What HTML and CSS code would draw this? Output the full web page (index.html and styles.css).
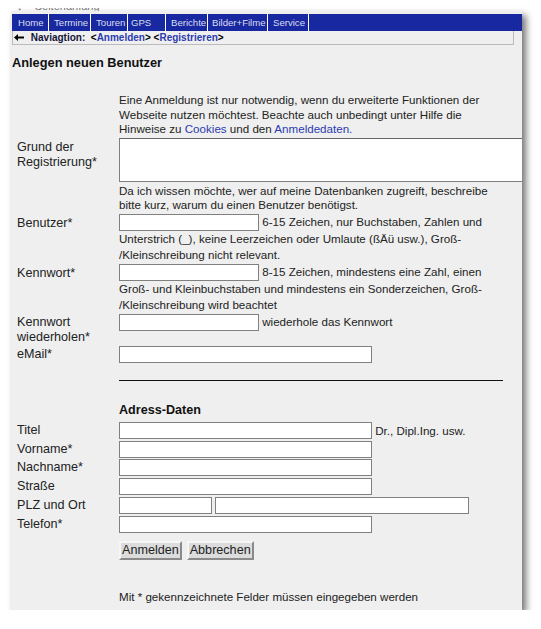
FILE: index.html
```html
<!DOCTYPE html>
<html lang="de">
<head>
<meta charset="UTF-8" />
<title>Registrieren</title>
<link rel="stylesheet" href="styles.css">
</head>
<body>

<div class="page">
  <div class="peek"><span>&darr; &nbsp; &nbsp;Seitenanfang</span></div>

  <div class="panel">

    <!-- main menu -->
    <ul class="menu">
      <li class="w-home">Home</li>
      <li class="w-termine">Termine</li>
      <li class="w-touren">Touren</li>
      <li class="w-gps">GPS</li>
      <li class="w-berichte">Berichte</li>
      <li class="w-bilder">Bilder+Filme</li>
      <li class="w-service">Service</li>
    </ul>

    <div class="crumbs">
      <svg class="back" width="10" height="7" viewBox="0 0 10 7"><path d="M0 3.5 L4 0 V2.5 H10 V4.5 H4 V7 Z" fill="#000"/></svg>
      <span class="crumb-title">Naviagtion:</span>&nbsp; &lt;<a href="#">Anmelden</a>&gt; &lt;<a href="#">Registrieren</a>&gt;
    </div>

    <h1>Anlegen neuen Benutzer</h1>

    <form class="reg">
      <div></div>
      <p class="note">Eine Anmeldung ist nur notwendig, wenn du erweiterte Funktionen der Webseite nutzen möchtest. Beachte auch unbedingt unter Hilfe die Hinweise zu <a href="#">Cookies</a> und den <a href="#">Anmeldedaten.</a></p>

      <label class="tall">Grund der Registrierung*</label>
      <textarea></textarea>

      <div></div>
      <p class="note">Da ich wissen möchte, wer auf meine Datenbanken zugreift, beschreibe bitte kurz, warum du einen Benutzer benötigst.</p>

      <label class="tall">Benutzer*</label>
      <div class="hint"><input type="text" class="short"> 6-15 Zeichen, nur Buchstaben, Zahlen und Unterstrich (_), keine Leerzeichen oder Umlaute (ßÄü usw.), Groß-<wbr>/Kleinschreibung nicht relevant.</div>

      <label class="tall">Kennwort*</label>
      <div class="hint"><input type="password" class="short"> 8-15 Zeichen, mindestens eine Zahl, einen Groß- und Kleinbuchstaben und mindestens ein Sonderzeichen, Groß-<wbr>/Kleinschreibung wird beachtet</div>

      <label>Kennwort wiederholen*</label>
      <div class="hint"><input type="password" class="short"> wiederhole das Kennwort</div>

      <label>eMail*</label>
      <div class="field"><input type="text" class="long"></div>

      <div></div>
      <hr>

      <div></div>
      <h2>Adress-Daten</h2>
    </form>

    <form class="reg address">
      <label>Titel</label>
      <div class="field"><input type="text" class="long"> Dr., Dipl.Ing. usw.</div>

      <label>Vorname*</label>
      <div class="field"><input type="text" class="long"></div>

      <label>Nachname*</label>
      <div class="field"><input type="text" class="long"></div>

      <label>Straße</label>
      <div class="field"><input type="text" class="long"></div>

      <label>PLZ und Ort</label>
      <div class="field pair"><input type="text" class="plz"><input type="text" class="ort"></div>

      <label>Telefon*</label>
      <div class="field"><input type="text" class="long"></div>

      <div></div>
      <div class="buttons">
        <button type="button">Anmelden</button>
        <button type="button">Abbrechen</button>
      </div>

      <div></div>
      <p class="note footnote">Mit * gekennzeichnete Felder müssen eingegeben werden</p>
    </form>

  </div>
</div>

</body>
</html>
```

FILE: styles.css
```css
body {
  margin: 0;
  background: #fff;
  color: #222;
  font-family: "Liberation Sans", Arial, sans-serif;
}
a {
  color: #2b3bb0;
  text-decoration: none;
}
.page {
  padding: 8px 0 0 11px;
}
.peek {
  height: 3px;
  overflow: hidden;
  padding-left: 6px;
  font-size: 11px;
  color: #777;
}
.peek span {
  display: block;
  line-height: 13px;
  margin-top: -8px;
}
.panel {
  width: 511px;
  height: 599px;
  box-sizing: border-box;
  padding: 3px 0 0 1px;
  background: #efefef;
  box-shadow: 4px 4px 7px rgba(0,0,0,0.55);
  overflow: hidden;
}

/* menu bar */
.menu {
  display: flex;
  list-style: none;
  margin: 0;
  padding: 0;
  height: 17px;
  background: #1728a0;
}
.menu li {
  box-sizing: border-box;
  border-right: 1px solid #fff;
  padding-left: 5px;
  font-size: 9.6px;
  line-height: 17px;
  color: #dcdef0;
  white-space: nowrap;
}
.menu .w-home { width: 37px; padding-left: 6px; }
.menu .w-termine { width: 42px; }
.menu .w-touren { width: 37px; }
.menu .w-gps { width: 38px; padding-left: 3px; }
.menu .w-berichte { width: 42px; }
.menu .w-bilder { width: 60px; padding-left: 4px; }
.menu .w-service { width: 41px; }

.crumbs {
  width: 502px;
  height: 14px;
  box-sizing: border-box;
  border: 1px solid #bbb;
  border-top: 0;
  font-size: 10px;
  font-weight: bold;
  line-height: 13px;
  color: #000;
  white-space: nowrap;
}
.crumbs .back {
  margin: 0 4px 0 1px;
}
.crumb-title {
  color: #14143a;
}

h1 {
  margin: 10px 0 0 0;
  font-size: 12.8px;
  line-height: 15px;
  color: #111;
}

/* form grid: label column + field column */
.reg {
  display: grid;
  grid-template-columns: 102px 384px;
  row-gap: 1.5px;
  align-items: start;
  margin: 23px 0 0 5px;
}
.reg label {
  font-size: 12.6px;
  line-height: 15px;
  padding-top: 1px;
}
.reg label.tall {
  padding-top: 2px;
}
.note {
  margin: 0;
  font-size: 11.6px;
  line-height: 14.5px;
}
.hint {
  font-size: 11.6px;
  line-height: 15.5px;
}
textarea {
  display: block;
  width: 420px;
  height: 44px;
  box-sizing: border-box;
  margin: 0;
  border: 1px solid #808080;
  border-top-color: #666;
  background: #fff;
  resize: none;
}
input {
  box-sizing: border-box;
  height: 17px;
  margin: 0;
  padding: 0 2px;
  border: 1px solid #808080;
  background: #fff;
  vertical-align: middle;
}
input.short { width: 140px; }
input.long { width: 253px; }
input.plz { width: 93px; }
input.ort { width: 254px; margin-left: 3px; }

/* single-line field cells */
.field {
  height: 17px;
  font-size: 11.6px;
  line-height: 17px;
  white-space: nowrap;
}
.field input {
  vertical-align: top;
}
.pair {
  display: flex;
}
hr {
  margin: 15px 0 0 0;
  border: 0;
  border-top: 1px solid #111;
  height: 0;
}
h2 {
  margin: 21px 0 1.5px 0;
  font-size: 12.6px;
  line-height: 15px;
  color: #111;
}
.address {
  margin-top: 2px;
  row-gap: 1.8px;
}
.address label {
  padding-top: 1px;
}
.buttons {
  display: flex;
  gap: 5px;
  margin-top: 6.5px;
}
button {
  margin: 0;
  padding: 0 1px;
  border: 2px solid;
  border-color: #f6f6f6 #8a8a8a #8a8a8a #f6f6f6;
  background: #dcdcdc;
  font-family: "Liberation Sans", Arial, sans-serif;
  font-size: 12.6px;
  line-height: 15px;
  color: #222;
}
.footnote {
  margin-top: 28px;
}
```
